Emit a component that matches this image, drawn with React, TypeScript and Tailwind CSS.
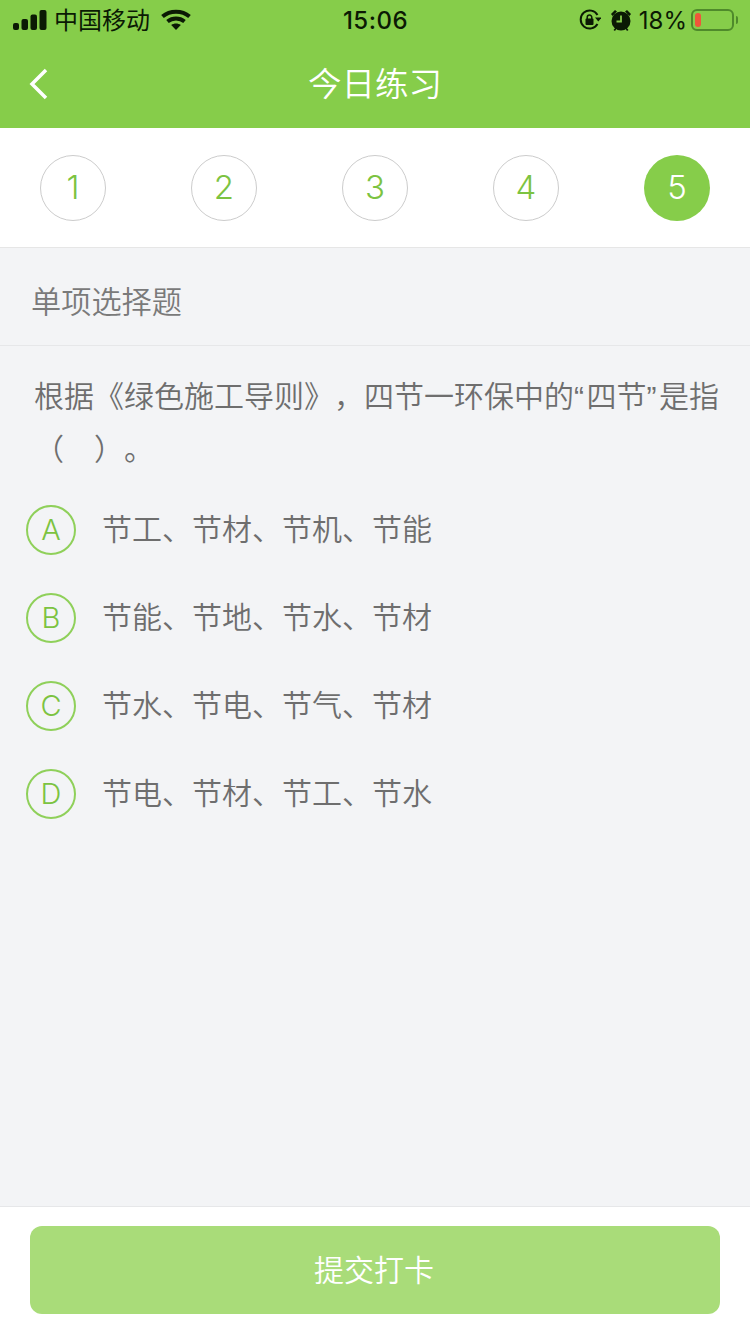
const cjk = "font-['Noto_Sans_CJK_SC','Noto_Sans',sans-serif]";

const steps = ["1", "2", "3", "4", "5"];

const options = [
  { key: "A", text: "节工、节材、节机、节能" },
  { key: "B", text: "节能、节地、节水、节材" },
  { key: "C", text: "节水、节电、节气、节材" },
  { key: "D", text: "节电、节材、节工、节水" },
];

function StatusBar() {
  return (
    <div className="flex h-10 items-center justify-between pl-[13px] pr-[12px] text-[#0b1a04]">
      <div className="flex w-[260px] items-center">
        <svg width="34" height="20" viewBox="0 0 34 20" fill="currentColor">
          <rect x="0" y="13" width="6" height="7" rx="2" />
          <rect x="8.500" y="9" width="6.500" height="11" rx="2" />
          <rect x="17.500" y="4.500" width="6.500" height="15.500" rx="2" />
          <rect x="26.500" y="0" width="7" height="20" rx="2" />
        </svg>
        <span className="ml-[7px] pb-[2px] text-[24px] leading-none font-['Noto_Sans_CJK_SC',sans-serif] font-normal">
          中国移动
        </span>
        <svg className="ml-[11px]" width="30" height="22" viewBox="0 0 30 22" fill="none" stroke="currentColor" strokeWidth="4">
          <path d="M1.500 7.500C9 1 21 1 28.500 7.500" />
          <path d="M6.500 12.500C11.500 8.500 18.500 8.500 23.500 12.500" />
          <path d="M15 21l-4.800-5c2.800-2 6.800-2 9.600 0z" fill="currentColor" stroke="none" />
        </svg>
      </div>
      <span className="pt-[2px] text-[24px] leading-none font-['Inter',sans-serif] font-medium tracking-[0.5px]">15:06</span>
      <div className="flex w-[260px] items-center justify-end">
        <svg width="22" height="22" viewBox="0 0 22 22" fill="none" stroke="currentColor" strokeWidth="2">
          <path d="M18.500 15A9 9 0 1 1 18.500 6" />
          <path d="M16 8.500h6.500l-3.200 4z" fill="currentColor" stroke="none" />
          <rect x="6.500" y="9.500" width="8" height="6.500" rx="1" fill="currentColor" stroke="none" />
          <path d="M8.200 10V8.300a2.300 2.300 0 0 1 4.600 0V10" strokeWidth="1.500" />
        </svg>
        <svg className="ml-[9px]" width="22" height="24" viewBox="0 0 22 24" fill="currentColor">
          <circle cx="11" cy="13" r="9.500" />
          <path d="M1 6l4-4 2 1.500-4.500 4.500zM21 6l-4-4-2 1.500 4.500 4.500z" />
          <path d="M3.500 22l2.500-3 1 1-2 3zM18.500 22l-2.500-3-1 1 2 3z" />
          <path d="M11 7.500v6H6.500" fill="none" stroke="#86cd4a" strokeWidth="1.800" />
        </svg>
        <span className="ml-[7px] pt-[2px] text-[24px] leading-none font-['Inter',sans-serif] font-normal">18%</span>
        <div className="ml-[4px] flex h-[22px] w-[43px] items-center rounded-[6px] border-2 border-[#4f8a2b] pl-[2px]">
          <div className="h-[14px] w-[6px] rounded-[3px] bg-[#f0563a]" />
        </div>
        <div className="ml-[2px] h-[8px] w-[2px] rounded-r-sm bg-[#4f8a2b]" />
      </div>
    </div>
  );
}

export default function App() {
  return (
    <div className={`flex h-[1334px] w-[750px] flex-col overflow-hidden bg-[#f3f4f6] [text-spacing-trim:space-all] ${cjk}`}>
      <header className="bg-[#86cd4a]">
        <StatusBar />
        <div className="relative flex h-[88px] items-center justify-center pb-[4px]">
          <svg className="absolute left-[28px] top-[28px]" width="22" height="32" viewBox="0 0 22 32" fill="none" stroke="#fff" strokeWidth="3.500">
            <path d="M18 2L4 16l14 14" />
          </svg>
          <span className="text-[33.500px] leading-none font-[350] text-white">今日练习</span>
        </div>
      </header>

      <div className="flex h-[120px] items-center justify-between border-b border-[#e6e6e6] bg-white px-[40px] pt-[1px] font-['Inter',sans-serif]">
        {steps.map((s, i) => (
          <div
            key={s}
            className={`flex h-[66px] w-[66px] items-center justify-center rounded-full text-[33px] font-[350] ${
              i === 4 ? "bg-[#86cd4a] text-white" : "border border-[#cccccc] text-[#7cc341]"
            }`}
          >
            {s}
          </div>
        ))}
      </div>

      <div className="flex h-[98px] items-center border-b border-[#e6e7e9] pl-[31px] pt-[8px] text-[30.200px] leading-none font-[350] text-[#7a7a7a]">
        单项选择题
      </div>

      <div className="flex-1">
        <div className="pl-[34px] pt-[23px] text-[30px] leading-[50px] font-[350] text-[#6e6e6e]">
          <div className="whitespace-nowrap">
            根据《绿色施工导则》，四节一环保中的
            <span className="font-['Liberation_Sans',sans-serif] tracking-[2.500px]">“</span>
            四节
            <span className="font-['Liberation_Sans',sans-serif] tracking-[2.500px]">”</span>
            是指
          </div>
          <div className="whitespace-nowrap">（　）。</div>
        </div>

        <div className="mt-[14px] flex flex-col pl-[26px]">
          {options.map((o) => (
            <div key={o.key} className="flex h-[88px] items-center">
              <div className="flex h-[50px] w-[50px] items-center justify-center rounded-full border-2 border-[#8fd05a] font-['Inter',sans-serif] text-[29px] font-[350] text-[#7cc341]">
                {o.key}
              </div>
              <span className="ml-[26px] pb-[6px] text-[30px] leading-none font-[350] text-[#6e6e6e]">{o.text}</span>
            </div>
          ))}
        </div>
      </div>

      <div className="h-[128px] border-t border-[#e6e7e9] bg-white px-[30px] pt-[19px]">
        <button className="flex h-[88px] w-full items-center justify-center rounded-[12px] bg-[#a9dc79] pb-[4px] pr-[2px] text-[30px] font-[350] text-white">
          提交打卡
        </button>
      </div>
    </div>
  );
}
